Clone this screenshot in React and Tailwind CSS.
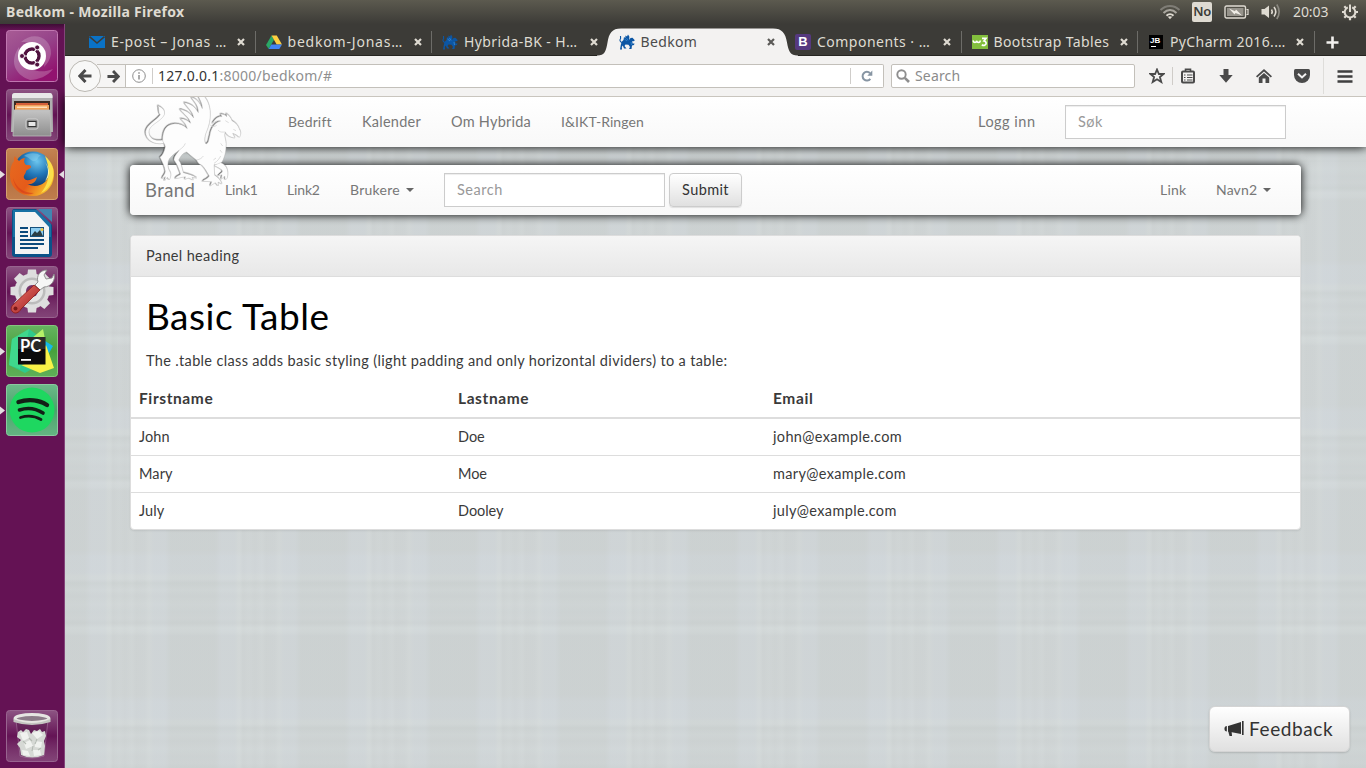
import React from "react";

/* ---------- Launcher icons ---------- */

const UbuntuIcon = () => (
  <svg viewBox="0 0 52 52" className="size-full">
    <defs>
      <linearGradient id="ub" x1="0" y1="0" x2="0.6" y2="1">
        <stop offset="0" stopColor="#a85c95" />
        <stop offset="0.5" stopColor="#96448a" />
        <stop offset="1" stopColor="#92126f" />
      </linearGradient>
    </defs>
    <rect x="0.5" y="0.5" width="51" height="51" rx="3" fill="url(#ub)" stroke="#c077b0" />
    <path d="M15 12C28 0 46 8 45 24C44 30 41 34 38 37C41 22 34 12 15 12Z" fill="#fff" opacity=".2" />
    <path d="M13 17C4 30 7 44 24 50C32 50 42 46 47 39C32 45 15 40 13 17Z" fill="#fff" opacity=".22" />
    <circle cx="26" cy="26" r="14" fill="#fff" />
    <circle cx="26" cy="26" r="7" fill="none" stroke="#50123f" strokeWidth="3.4" />
    <g stroke="#fff" strokeWidth="1.2">
      <path d="M26 26L16 26M26 26L31 17.500M26 26L31 34.500" />
    </g>
    <circle cx="26" cy="26" r="5.200" fill="#fff" />
    <g fill="#50123f" stroke="#fff" strokeWidth=".9">
      <circle cx="16" cy="26" r="2.500" />
      <circle cx="31.200" cy="17.400" r="2.500" />
      <circle cx="31.200" cy="34.600" r="2.500" />
    </g>
  </svg>
);

const Tile = ({ a = "#8d5483", b = "#641455", stroke = "#98648f" }) => {
  const id = "tile" + a.slice(1) + b.slice(1);
  return (
    <>
      <defs>
        <linearGradient id={id} x1="0" y1="0" x2="0" y2="1">
          <stop offset="0" stopColor={a} />
          <stop offset="0.5" stopColor={b} />
          <stop offset="1" stopColor={a} stopOpacity=".75" />
        </linearGradient>
      </defs>
      <rect x="0.5" y="0.5" width="51" height="51" rx="3" fill={b} />
      <rect x="0.5" y="0.5" width="51" height="51" rx="3" fill={`url(#${id})`} stroke={stroke} />
    </>
  );
};

const FilesIcon = () => (
  <svg viewBox="0 0 52 52" className="size-full">
    <defs>
      <linearGradient id="cab" x1="0" y1="0" x2="0" y2="1">
        <stop offset="0" stopColor="#c4c4c4" />
        <stop offset="1" stopColor="#8e8e8e" />
      </linearGradient>
    </defs>
    <Tile />
    <path d="M6 7Q6 4 9 4H44Q46 4 46.500 7L47 43H5Z" fill="#b0b0b0" />
    <path d="M6 7Q6 4 9 4H44Q46 4 46.500 7V9H6Z" fill="#e8e8e8" />
    <rect x="8" y="12" width="36" height="10" fill="#3a2a22" />
    <rect x="10" y="14" width="32" height="8" fill="#d5603a" />
    <rect x="9" y="16" width="34" height="6" fill="#f0a35c" />
    <rect x="11" y="17.500" width="30" height="1.500" fill="#ffe0b8" />
    <path d="M8 21H44L45 47H7Z" fill="url(#cab)" stroke="#bdbdbd" strokeWidth=".8" />
    <rect x="20" y="30" width="12" height="10" rx="2" fill="#8d8d8d" stroke="#d0d0d0" />
    <rect x="22" y="32.500" width="8" height="5" fill="#e6e6e6" stroke="#333" />
  </svg>
);

const FirefoxIcon = () => (
  <svg viewBox="0 0 52 52" className="size-full">
    <defs>
      <radialGradient id="globe" cx=".6" cy=".25" r=".7">
        <stop offset="0" stopColor="#6cc6ee" />
        <stop offset=".5" stopColor="#2277b8" />
        <stop offset="1" stopColor="#0c3268" />
      </radialGradient>
      <linearGradient id="fox" x1="0" y1="0" x2="1" y2=".6">
        <stop offset="0" stopColor="#e66a20" />
        <stop offset=".6" stopColor="#e55b1a" />
        <stop offset="1" stopColor="#f7bd2a" />
      </linearGradient>
    </defs>
    <Tile a="#c48452" b="#b26a3c" stroke="#d5a070" />
    <circle cx="27" cy="23" r="19.500" fill="url(#globe)" />
    <path d="M18 8C22 5 30 4 35 8C31 8 33 12 29 13C25 14 24 9 18 8Z" fill="#8fd4f2" opacity=".45" />
    <path d="M38 8C45 13 49 20 48 28C47 40 38 48 27 48C13 48 4 39 4 27C4 21 5 17 8 13C8 10 8 9 9 8C10 10 12 12 13 13C15 11 17 10 19 10C17.500 13 18 15 20 17C23 17 25 17 25 19C25 20 21 22 20 23C20 26 17 27 18 30C20 34 25 32 31 29C30 34 26 37 21 36C31 41 42 36 43 25C44 18 42 12 38 8Z" fill="url(#fox)" />
    <path d="M39 8C46 14 49 21 47 30C45 38 40 43 35 45C42 37 46 25 39 8Z" fill="#fbe04b" />
    <path d="M39 14C43 20 43 27 39 33C44 30 45 21 39 14Z" fill="#fff5a4" />
    <path d="M7 30C10 40 18 45 28 45C20 49 9 43 7 30Z" fill="#d43c1a" opacity=".6" />
  </svg>
);

const WriterIcon = () => (
  <svg viewBox="0 0 52 52" className="size-full">
    <Tile />
    <path d="M8 2H30L46 18V47Q46 50 43 50H9Q6 50 6 47V5Q6 2 8 2Z" fill="#0b5288" />
    <path d="M7 3H31L45 17V30H7Z" fill="#2387b8" opacity=".6" />
    <path d="M9 5H29L43 20V47H9Z" fill="#f4f4f4" />
    <path d="M32 2H46V15Z" fill="#4285b0" />
    <path d="M14 21H22M14 25H22M14 29H22M14 33H38M14 37H38M14 41H32" stroke="#0b4a7c" strokeWidth="1.800" />
    <rect x="24.500" y="20.500" width="13" height="9" fill="#8ecdf0" stroke="#17507c" />
    <path d="M25 29L29 24L31 26L34 23L37 29Z" fill="#2b3d44" />
    <circle cx="36" cy="22.500" r="1.500" fill="#f4c83f" />
  </svg>
);

const teeth = [0, 45, 90, 135, 180, 225, 270, 315];

const SettingsIcon = () => (
  <svg viewBox="0 0 52 52" className="size-full">
    <defs>
      <linearGradient id="redh" x1="0" y1="0" x2="1" y2="1">
        <stop offset="0" stopColor="#ee7a72" />
        <stop offset="1" stopColor="#9e1717" />
      </linearGradient>
    </defs>
    <Tile />
    <g fill="#dedede">
      {teeth.map((d) => (
        <path key={d} d="M21 11L22 3.500H30L31 11Z" transform={`rotate(${d} 26 25)`} />
      ))}
      <circle cx="26" cy="25" r="17.500" />
    </g>
    <circle cx="26" cy="25" r="13.500" fill="#bcbcbc" />
    <circle cx="26" cy="25" r="11" fill="#e5e5e5" />
    <circle cx="26" cy="25" r="6" fill="#74336a" />
    <path d="M29 19L32 16C30 10 34 4 41 4L38 9L40 13L46 12L48 8C50 14 45 21 38 21L34 24Z" fill="#f6f6f6" stroke="#888" strokeWidth=".9" />
    <path d="M28 19L34 24L15 43C13 47 9 48 7 46C4 44 5 40 8 38Z" fill="url(#redh)" stroke="#8e1a14" strokeWidth=".8" />
    <circle cx="9.500" cy="42.500" r="2" fill="#7a1818" />
  </svg>
);

const PyCharmIcon = () => (
  <svg viewBox="0 0 52 52" className="size-full">
    <Tile a="#66b360" b="#47a13c" stroke="#86c57f" />
    <path d="M6 14L23 4L34 12L40 36L19 48L3 40Z" fill="#2fc98b" />
    <path d="M6 14L23 4L20 20L14 44L3 40Z" fill="#44dc8c" opacity=".8" />
    <path d="M26 13L37 4L39 14Z" fill="#b4f068" />
    <path d="M36 14L47 21L42 30L36 28Z" fill="#14b9e8" />
    <path d="M40 20L48 43L34 48L15 40L30 36Z" fill="#f8f247" />
    <rect x="12" y="12" width="27.500" height="27.500" fill="#0c0c0c" />
    <path d="M12 12H39.500V24H12Z" fill="#fff" opacity=".12" />
    <text x="14" y="27" fontFamily="Lato, sans-serif" fontWeight="700" fontSize="16.500" fill="#fff">PC</text>
    <rect x="15" y="34" width="10" height="1.800" fill="#fff" />
  </svg>
);

const SpotifyIcon = () => (
  <svg viewBox="0 0 52 52" className="size-full">
    <Tile a="#6db98a" b="#48a56a" stroke="#8bc9a0" />
    <circle cx="26" cy="26" r="22.500" fill="#1ed760" />
    <g fill="none" stroke="#122016" strokeLinecap="round">
      <path d="M12.500 18C22 15 33 16 41 21" strokeWidth="4.400" />
      <path d="M13.500 26C21 23.500 30 24.500 37 29" strokeWidth="3.600" />
      <path d="M14.500 33.500C21 31.500 29 32 35 35.500" strokeWidth="2.800" />
    </g>
  </svg>
);

const TrashIcon = () => (
  <svg viewBox="0 0 52 52" className="size-full">
    <Tile />
    <path d="M10 10L14 46Q26 50 38 46L42 10Z" fill="#4e1a46" opacity=".35" stroke="#d8c8d6" strokeWidth=".8" />
    <path d="M12 22L15 20L17 22L20 19L23 20L25 24L28 20L31 21L34 19L36 22L39 21L40 26L38 31L39 36L38 45Q26 50 15 45L14 38L11 34L15 30L11 27Z" fill="#d6d9d5" />
    <path d="M14 23L21 22L23 28L17 31ZM26 23L33 21L37 25L31 29ZM18 33L24 30L27 36L20 39ZM29 31L36 32L35 38L29 37ZM16 40L22 41L24 46L17 45ZM27 40L34 40L35 45L28 46Z" fill="#f0f2ef" />
    <path d="M17 31L20 34M23 28L26 31M31 29L29 34M27 36L26 41M35 38L32 40" fill="none" stroke="#b4bab3" strokeWidth="1.100" />
    <ellipse cx="26" cy="8.500" rx="17" ry="4" fill="#8c7c88" stroke="#e6e6e2" strokeWidth="3" />
    <path d="M7.500 9V12Q26 18 44.500 12V9Q26 17 7.500 9Z" fill="#c4c5c1" />
  </svg>
);

const launcher = [
  { Icon: UbuntuIcon },
  { Icon: FilesIcon },
  { Icon: FirefoxIcon, running: true, focused: true },
  { Icon: WriterIcon },
  { Icon: SettingsIcon },
  { Icon: PyCharmIcon, running: true },
  { Icon: SpotifyIcon, running: true },
];

function Launcher() {
  return (
    <aside className="flex w-[65px] shrink-0 flex-col border-r border-[#84447a] bg-[linear-gradient(#3f0c36,#641254_6px,#641254)] pt-1.5 pb-1.5">
      <div className="flex flex-col gap-[7px]">
        {launcher.map(({ Icon, running, focused }, i) => (
          <div key={i} className="flex h-[52px] items-center">
            <svg viewBox="0 0 6 9" className="h-[9px] w-1.5">
              {running && <path d="M0 0.500L5 4.500L0 8.500Z" fill="#e3dde1" />}
            </svg>
            <div className="size-[52px]"><Icon /></div>
            <svg viewBox="0 0 6 9" className="h-[9px] w-1.5">
              {focused && <path d="M6 0.500L1 4.500L6 8.500Z" fill="#e3dde1" />}
            </svg>
          </div>
        ))}
      </div>
      <div className="mt-auto ml-1.5 size-[52px]"><TrashIcon /></div>
    </aside>
  );
}

/* ---------- Desktop top bar ---------- */

function TopBar() {
  return (
    <header className="flex h-6 shrink-0 items-center bg-[linear-gradient(#5c5a4f,#3c3b37)] pl-1.5 text-[#dfdbd2]">
      <span className="font-['Noto_Sans'] text-[14px] leading-6 font-bold tracking-[0.320px] whitespace-nowrap">Bedkom - Mozilla Firefox</span>
      <div className="ml-auto flex h-6 items-center">
        <svg width="22" height="16" viewBox="0 0 22 16" fill="none" strokeWidth="2">
          <path d="M1.500 6C7 0.500 15 0.500 20.500 6" stroke="#7f7d76" />
          <path d="M4.500 9C8.500 5 13.500 5 17.500 9" stroke="#a9a69e" />
          <path d="M7.500 11.800C9.500 9.800 12.500 9.800 14.500 11.800" stroke="#dfdbd2" />
          <path d="M8.800 12.800L11 15.200L13.200 12.800Q11 11.500 8.800 12.800Z" fill="#dfdbd2" />
        </svg>
        <span className="ml-[11px] flex h-5 w-5 items-center justify-center rounded-[2px] bg-[#dfdbd2] font-['Noto_Sans'] text-[13px] font-semibold tracking-[-0.5px] text-[#3c3b37]">No</span>
        <svg width="25" height="14" viewBox="0 0 25 14" className="ml-3">
          <rect x="1" y="1" width="20.500" height="12" rx="1.500" fill="none" stroke="#dfdbd2" strokeWidth="1.400" />
          <rect x="3" y="3" width="16.500" height="8" fill="#96938b" />
          <path d="M22.500 4.500H24V9.500H22.500" fill="none" stroke="#dfdbd2" strokeWidth="1.200" />
          <path d="M5 3.500L11 6.300L12 4.500L18 10.500L11.500 8L10.500 9.500Z" fill="#efece5" />
        </svg>
        <svg width="20" height="18" viewBox="0 0 20 18" className="ml-3" fill="none" strokeWidth="1.600">
          <path d="M0.500 6H3.500L8 2.500V15L3.500 11.500H0.500Z" fill="#dfdbd2" />
          <path d="M10.500 6.500Q12 8.700 10.500 11" stroke="#dfdbd2" />
          <path d="M13 4Q16.500 8.700 13 13.500" stroke="#dfdbd2" />
          <path d="M15.800 1.500Q20.500 8.700 15.800 16" stroke="#8b8981" />
        </svg>
        <span className="ml-3 w-[37px] font-['Noto_Sans'] text-[14px] leading-6 tracking-[-0.1px] whitespace-nowrap">20:03</span>
        <svg width="18" height="18" viewBox="0 0 18 18" className="mr-[7px] ml-[11px]" fill="none" stroke="#dfdbd2">
          <path d="M6.800 4.300A5.300 5.300 0 1 0 11.200 4.300" strokeWidth="2" />
          <path d="M9 1.500V9" strokeWidth="2" />
          <path d="M1 9H4M14 9H17M9 14V17.200M3.300 3.300L5.300 5.300M14.700 3.300L12.700 5.300M3.300 14.700L5.300 12.700M14.700 14.700L12.700 12.700" strokeWidth="2.200" />
        </svg>
      </div>
    </header>
  );
}

/* ---------- Browser tabs ---------- */

const MailFavicon = () => (
  <svg viewBox="0 0 16 16" className="size-4">
    <rect y="2" width="16" height="12" fill="#0a72c6" />
    <path d="M0.500 2.500L8 9L15.500 2.500" fill="none" stroke="#3c3b37" strokeWidth="1.600" />
  </svg>
);
const DriveFavicon = () => (
  <svg viewBox="0 0 16 16" className="size-4">
    <path d="M5.500 1.500L0 11L2.700 15L8 5.800Z" fill="#2aa866" />
    <path d="M5.500 1.500H10.800L16 10.500H10.700Z" fill="#ffcf40" />
    <path d="M5.300 10.500H16L13.300 15H2.700Z" fill="#4285f4" />
  </svg>
);
const GriffinFavicon = () => (
  <svg viewBox="0 0 16 16" className="size-4" fill="#0c56a4">
    <path d="M4.500 6L5 3L6.300 4L6.500 1.500L8 2.500L9 0.500L10.300 2.500V6L11.500 4L13.500 3.800L15.800 6.200L14.800 7.200L13.300 7L13.500 9.500L15.500 9.500L15 11L13 11.500L12.500 15H10L11 13L9.500 10.800L6.500 10.500L5.500 12L7.500 14.500H5L3.800 11.500L2.800 13L3 15.500H1L1.700 11.500L2.500 8Z" />
    <path d="M3 8.500C1 8 0.300 6 1.600 4.500L1.500 2" fill="none" stroke="#0c56a4" strokeWidth="1.100" />
    <path d="M5.500 5L8 7M7.500 4L9 6.500M12 8L12.500 11" stroke="#3f91d8" strokeWidth=".7" />
  </svg>
);
const BootstrapFavicon = () => (
  <span className="flex size-4 items-center justify-center rounded-[2px] bg-[#56397f] font-['Liberation_Sans'] text-[13px] leading-none font-bold text-white">B</span>
);
const W3Favicon = () => (
  <svg viewBox="0 0 16 16" className="size-4">
    <rect y="1" width="16" height="14" fill="#83bf3d" />
    <path d="M1 6.500Q1.500 8.500 3 8.500Q4.500 8.500 4.500 6.800Q5 8.500 6.500 8.500Q8 8.500 8.500 6.500" fill="none" stroke="#fff" strokeWidth="1.500" />
    <path d="M10 4.300H14L12 7Q14.500 7.500 14 9.800Q12.500 12.500 9.800 10.700" fill="none" stroke="#fff" strokeWidth="1.700" />
  </svg>
);
const JetBrainsFavicon = () => (
  <span className="flex size-4 items-center justify-center">
    <span className="flex h-3.5 w-3.5 flex-col items-start justify-between bg-black px-px py-0.5">
      <span className="font-['Liberation_Sans'] text-[8px] leading-[7px] font-bold text-white">JB</span>
      <span className="ml-px h-px w-[5px] bg-white" />
    </span>
  </span>
);

const tabs = [
  { icon: MailFavicon, label: "E-post – Jonas …", track: "tracking-[0.640px]", sep: true },
  { icon: DriveFavicon, label: "bedkom-Jonas…", track: "tracking-[0.800px]", sep: true },
  { icon: GriffinFavicon, label: "Hybrida-BK - H…", track: "tracking-[0.400px]" },
  { icon: GriffinFavicon, label: "Bedkom", track: "tracking-[0.350px]", active: true },
  { icon: BootstrapFavicon, label: "Components · …", track: "tracking-[0.480px]", sep: true },
  { icon: W3Favicon, label: "Bootstrap Tables", track: "tracking-[0.370px]", sep: true },
  { icon: JetBrainsFavicon, label: "PyCharm 2016.…", track: "tracking-[0.380px]", sep: true },
];

function Tab({ icon: Icon, label, track, sep, active }) {
  return (
    <div className="relative flex h-8 w-[176.500px] shrink-0 items-center pt-[3px] pl-2.5">
      {active && (
        <svg className="absolute top-1 -left-3 h-[29px] w-[202px]" viewBox="0 0 202 29">
          <path d="M0 29V27.500C8 27.500 9 23 10.500 14.500C12 5 15 0.500 24 0.500H176C185 0.500 188.500 5 190 14.500C191.500 23 193 27.500 201 27.500V29Z" fill="#f3f2f1" />
        </svg>
      )}
      <span className="relative size-4 shrink-0"><Icon /></span>
      <span className={`relative ml-1.5 w-[126px] overflow-visible font-['Noto_Sans'] text-[14px] leading-6 whitespace-nowrap ${track} ${active ? "text-[#4c4c4c]" : "text-[#dfdbd2]"}`}>{label}</span>
      <svg viewBox="0 0 8 8" className="relative size-2">
        <path d="M1 1L7 7M7 1L1 7" stroke={active ? "#5b5a57" : "#dfdbd2"} strokeWidth="2.200" />
      </svg>
      {sep && <span className="absolute top-[7px] right-0 h-[22px] w-px bg-[#6d6c68]" />}
    </div>
  );
}

function TabStrip() {
  return (
    <div className="flex h-8 shrink-0 border-b border-[#262521] bg-[#3c3b37] pl-3.5">
      {tabs.map((t) => <Tab key={t.label} {...t} />)}
      <svg viewBox="0 0 13 13" className="mt-3 ml-[11px] size-[13px]">
        <path d="M6.500 0.500V12.500M0.500 6.500H12.500" stroke="#f2f1ee" strokeWidth="2.600" />
      </svg>
    </div>
  );
}

/* ---------- Browser toolbar ---------- */

const Arrow = ({ className }) => (
  <svg viewBox="0 0 14 14" className={className}>
    <path d="M7.500 1L1.800 7L7.500 13M2 7H13.500" fill="none" stroke="#4a4a4a" strokeWidth="3" />
  </svg>
);

function Toolbar() {
  return (
    <div className="relative z-10 flex h-[41px] shrink-0 items-center border-b border-[#c9c5be] bg-[#f3f2f1] pl-1">
      <div className="z-10 flex size-[32px] shrink-0 items-center justify-center rounded-full border border-[#bbb8b2] bg-[#f8f8f7]">
        <Arrow className="size-3.5" />
      </div>
      <div className="-ml-1 flex h-6 w-[787px] shrink-0 items-center rounded-r-[2px] border border-l-0 border-[#c3c0ba] bg-white">
        <div className="flex h-full w-[29px] items-center justify-center border-r border-[#c3c0ba] bg-[#f6f5f4] pl-1">
          <Arrow className="h-[13px] w-[13px] rotate-180" />
        </div>
        <svg viewBox="0 0 14 14" className="ml-1.5 size-3.5" fill="none" stroke="#8e8e8e">
          <circle cx="7" cy="7" r="6.300" />
          <path d="M7 6V10.500M7 3.300V4.800" strokeWidth="1.500" />
        </svg>
        <span className="ml-1.5 h-4 w-px bg-[#cfcdca]" />
        <span className="ml-[5px] font-['Noto_Sans'] text-[14px] leading-[22px] tracking-[0.240px] whitespace-nowrap text-[#8f8f8f]"><span className="text-[#333]">127.0.0.1</span>:8000/bedkom/#</span>
        <span className="ml-auto h-4 w-px bg-[#cfcdca]" />
        <svg viewBox="0 0 12 12" className="mr-2.5 ml-2.5 size-3" fill="none">
          <path d="M9.300 8.800A4.300 4.300 0 1 1 9 3.200" stroke="#8795a3" strokeWidth="2" />
          <path d="M11.300 0.500V5.700H6.300Z" fill="#8795a3" />
        </svg>
      </div>
      <div className="ml-[7px] flex h-6 w-[244px] shrink-0 items-center rounded-[2px] border border-[#c3c0ba] bg-white pl-1">
        <svg viewBox="0 0 14 14" className="size-3.5" fill="none" stroke="#8e8e8e">
          <circle cx="5.500" cy="5.500" r="4.200" strokeWidth="1.900" />
          <path d="M8.800 8.800L13 13" strokeWidth="2.600" />
        </svg>
        <span className="ml-[5px] font-['Noto_Sans'] text-[14px] leading-[22px] tracking-[0.150px] text-[#8b8b8b]">Search</span>
      </div>
      <svg viewBox="0 0 16 16" className="ml-[14px] size-4" fill="none" stroke="#4a4a4a" strokeWidth="1.800">
        <path d="M8 1.500L9.900 6H14.600L10.900 9L12.300 14L8 11.200L3.700 14L5.100 9L1.400 6H6.100Z" />
      </svg>
      <span className="ml-[7px] h-[18px] w-px bg-[#cfccc8]" />
      <svg viewBox="0 0 14 16" className="ml-2 h-4 w-3.5" fill="none" stroke="#4a4a4a">
        <rect x="1" y="3.500" width="12" height="11" rx="1" strokeWidth="2" />
        <path d="M4.500 3V1.200H9.500V3" strokeWidth="1.600" />
        <path d="M3 7H4.500M6 7H11.500M3 9.500H4.500M6 9.500H11.500M3 12H4.500M6 12H11.500" strokeWidth="1.200" />
      </svg>
      <svg viewBox="0 0 14 14" className="ml-6 size-3.5">
        <path d="M4.500 0H9.500V6H13.700L7 13.800L0.300 6H4.500Z" fill="#4a4a4a" />
      </svg>
      <svg viewBox="0 0 16 14" className="ml-[23px] h-3.500 w-4">
        <path d="M8 0L16 7.300L14.800 8.500L8 2.400L1.200 8.500L0 7.300Z" fill="#4a4a4a" />
        <path d="M2.800 8.600L8 4L13.200 8.600V14H9.500V9.500H6.500V14H2.800Z" fill="#4a4a4a" />
      </svg>
      <svg viewBox="0 0 16 14" className="ml-[22px] h-3.500 w-4">
        <path d="M1.500 0H14.500Q16 0 16 1.500V6A8 8 0 0 1 0 6V1.500Q0 0 1.500 0Z" fill="#4a4a4a" />
        <path d="M4 4.800L8 8.500L12 4.800" fill="none" stroke="#f3f2f1" strokeWidth="2" />
      </svg>
      <span className="ml-[13px] h-9 w-px bg-[#deddda]" />
      <svg viewBox="0 0 16 13" className="ml-[13px] h-[13px] w-4">
        <path d="M0.500 1.500H15.500M0.500 6.500H15.500M0.500 11.500H15.500" stroke="#3f3f3f" strokeWidth="2.600" />
      </svg>
    </div>
  );
}

/* ---------- Web page ---------- */

const Griffin = () => (
  <svg className="pointer-events-none absolute top-0 left-[75px] z-20 h-[93px] w-[105px]" viewBox="30 21 315 279">
    <defs>
      <filter id="emboss" x="-5%" y="-5%" width="110%" height="110%">
        <feDropShadow dx="-1.500" dy="-1.500" stdDeviation="2" floodColor="#222" floodOpacity="1" />
      </filter>
    </defs>
    <g filter="url(#emboss)" fill="#fdfdfd" stroke="#c0c0c0" strokeWidth="1.200" strokeLinejoin="round">
      <path d="M102 160C70 166 45 148 47 124C50 103 78 92 91 74C84 68 88 58 84 47C96 52 106 60 103 74C94 94 62 102 57 122C54 142 72 155 98 150Z" />
      <path d="M98 150C98 122 108 102 135 101C150 101 162 106 172 116C168 100 160 96 152 86C164 86 174 92 182 100C178 82 162 74 150 58C165 60 180 68 191 84C188 62 172 54 163 38C180 40 194 48 205 68C206 44 190 34 184 22C198 26 208 34 217 56C218 40 208 28 204 16H220C248 45 244 92 230 124C222 142 223 158 228 162C238 158 236 146 240 135C242 118 252 98 272 93C262 90 256 95 248 100C254 86 266 78 276 80L272 72C280 72 286 75 290 80L290 71C298 76 303 84 306 92C318 98 326 108 328 118C333 124 334 134 328 142C322 136 316 132 308 130L315 144C302 142 292 138 286 126C280 138 290 150 288 166C288 182 286 194 280 208C276 220 266 226 252 224C254 236 252 246 254 256C264 262 272 270 276 282L264 276L265 288L256 278L241 288L245 275L218 274C226 266 234 266 238 258C230 246 226 236 216 226C206 222 202 216 200 210C188 202 180 194 170 186C158 188 150 202 146 210C154 220 156 234 160 248C174 252 188 254 200 264L186 262L190 270L176 264L165 268L166 260L136 266C140 256 148 258 152 252C146 238 144 226 132 210C132 198 142 190 148 180C138 188 128 194 118 206C112 216 112 230 118 242C124 250 124 258 118 270L112 262L104 272L106 260L96 266C98 258 106 252 106 244C104 230 98 218 90 202C98 196 104 184 106 170C106 162 98 158 98 150Z" />
      <path d="M272 218C286 222 298 238 292 264L286 270L284 258L274 268L276 254L264 258C272 248 280 248 276 240C268 234 258 230 252 226Z" />
    </g>
    <g fill="none" stroke="#d4d4d4" strokeWidth="2.400">
      <path d="M148 180C156 174 162 170 166 160M200 210C210 208 216 204 220 198M240 104C246 112 254 110 260 106M264 120C270 128 278 126 286 126M252 220C262 214 268 206 272 198M286 92L296 98" />
      <path d="M310 118L318 122M250 210L258 204M272 160L278 168M270 180L276 188" />
    </g>
  </svg>
);

const Caret = () => (
  <svg viewBox="0 0 8 4" className="ml-1.5 h-1 w-2"><path d="M0 0H8L4 4Z" fill="#666" /></svg>
);

const NavLink = ({ children, className }) => (
  <a className={`flex shrink-0 items-center whitespace-nowrap text-[#777] ${className}`}>{children}</a>
);

const Input = ({ children, className = "" }) => (
  <div className={`flex h-[34px] w-[221px] shrink-0 items-center border border-[#ccc] bg-white px-3 text-[#999] shadow-[inset_0_1px_1px_rgba(0,0,0,.075)] ${className}`}>{children}</div>
);

const rows = [
  ["John", "Doe", "john@example.com"],
  ["Mary", "Moe", "mary@example.com"],
  ["July", "Dooley", "july@example.com"],
];

const columnTracking = ["tracking-[0.100px]", "tracking-[-0.050px]", "tracking-[0.350px]"];

function Page() {
  return (
    <main className="relative flex-1 bg-[#d0d5d7] bg-[repeating-linear-gradient(90deg,rgba(200,206,205,.3)_0px,rgba(200,206,205,.3)_20px,rgba(209,216,221,.3)_26px,rgba(209,216,221,.3)_40px,rgba(218,224,223,.3)_43px,rgba(218,224,223,.3)_45px,rgba(204,209,208,.2)_48px,rgba(214,220,219,.2)_54px,rgba(204,209,208,.2)_60px,rgba(217,223,222,.2)_67px,rgba(204,209,208,.2)_71px,rgba(208,214,214,.2)_80px,rgba(217,223,222,.3)_84px,rgba(209,216,221,.3)_89px,rgba(209,216,221,.3)_100px,rgba(200,206,205,.3)_106px,rgba(200,206,205,.3)_130px),repeating-linear-gradient(180deg,rgba(203,208,207,.45)_0px,rgba(203,208,207,.45)_18px,rgba(208,214,219,.45)_25px,rgba(208,214,219,.45)_40px,rgba(215,221,220,.45)_44px,rgba(215,221,220,.45)_47px,rgba(199,205,203,.45)_51px,rgba(211,217,216,.45)_58px,rgba(203,208,207,.45)_64px,rgba(211,217,216,.45)_72px,rgba(204,210,210,.45)_80px,rgba(208,213,213,.45)_86px,rgba(199,205,203,.45)_91px,rgba(217,223,222,.45)_96px,rgba(213,219,218,.45)_100px,rgba(203,208,207,.45)_104px,rgba(203,208,207,.45)_145px)] font-[Lato] text-[14px] leading-5">
      <Griffin />
      <nav className="flex h-[50px] bg-[linear-gradient(#fff,#f8f8f8)] pl-[223px] shadow-[0_0_10px_#000]">
        <NavLink className="w-[74px] tracking-[0.150px]">Bedrift</NavLink>
        <NavLink className="w-[89px] text-[14.500px] tracking-[0.250px]">Kalender</NavLink>
        <NavLink className="w-[110px] text-[14.500px] tracking-[0.230px]">Om Hybrida</NavLink>
        <NavLink className="tracking-[0.080px]">I&amp;IKT-Ringen</NavLink>
        <NavLink className="ml-auto w-[87px] text-[14.500px] tracking-[0.500px]">Logg inn</NavLink>
        <Input className="mt-2 mr-20 text-[14.500px] tracking-[0.500px]">Søk</Input>
      </nav>

      <div className="pr-[65px] pl-[65px]">
        <nav className="mt-[18px] flex h-[50px] rounded-[4px] bg-[linear-gradient(#fff,#f8f8f8)] pl-[15px] shadow-[0_0_10px_#000]">
          <NavLink className="w-20 text-[18.500px] tracking-[0.400px]">Brand</NavLink>
          <NavLink className="w-[62px] tracking-[-0.150px]">Link1</NavLink>
          <NavLink className="w-[63px] tracking-[-0.150px]">Link2</NavLink>
          <NavLink className="w-[94px] tracking-[0.250px]">Brukere<Caret /></NavLink>
          <Input className="mt-2 text-[14.500px] tracking-[0.550px]">Search</Input>
          <button className="mt-2 ml-1 h-[34px] w-[73px] rounded-[4px] border border-[#ccc] bg-[linear-gradient(#fff,#e0e0e0)] text-[14.500px] tracking-[0.400px] text-[#333] shadow-[0_1px_1px_rgba(0,0,0,.1)]">Submit</button>
          <NavLink className="ml-auto w-14 tracking-[0.200px]">Link</NavLink>
          <NavLink className="w-[85px] tracking-[0.150px]">Navn2<Caret /></NavLink>
        </nav>

        <section className="mt-5 rounded-[4px] border border-[#ddd] bg-white text-[14.500px] text-[#3a3a3a] shadow-[0_1px_2px_rgba(0,0,0,.08)]">
          <div className="h-[41px] rounded-t-[3px] border-b border-[#ddd] bg-[linear-gradient(#f5f5f5,#e8e8e8)] px-[15px] py-2.5 tracking-[0.350px]">Panel heading</div>
          <div className="px-[15px] pt-[19px]">
            <h2 className="text-[37px] leading-10 font-normal tracking-[0.500px] text-black">Basic Table</h2>
            <p className="mt-[15px] tracking-[0.345px]">The .table class adds basic styling (light padding and only horizontal dividers) to a table:</p>
          </div>
          <table className="mt-[9px] w-full table-fixed border-collapse text-left">
            <colgroup>
              <col className="w-[319px]" />
              <col className="w-[315px]" />
              <col />
            </colgroup>
            <thead>
              <tr className="h-[38px] border-b-2 border-[#ddd]">
                {["Firstname", "Lastname", "Email"].map((h) => <th key={h} className="px-2 pb-0.5 text-[15.500px] font-bold tracking-[0.600px]">{h}</th>)}
              </tr>
            </thead>
            <tbody>
              {rows.map((r) => (
                <tr key={r[0]} className="h-[37px] border-t border-[#ddd] first:border-t-0">
                  {r.map((c, i) => <td key={c} className={`px-2 ${columnTracking[i]}`}>{c}</td>)}
                </tr>
              ))}
            </tbody>
          </table>
        </section>
      </div>

      <button className="absolute right-4 bottom-4 flex h-[46px] w-[141px] items-center rounded-[6px] border border-[#d4d4d4] bg-[linear-gradient(#fff,#e0e0e0)] pl-3.5 text-[19px] tracking-[0.600px] text-[#333] shadow-[0_1px_2px_rgba(0,0,0,.15)]">
        <svg viewBox="0 0 20 16" className="mr-[5px] h-4 w-5" fill="#333">
          <path d="M4 5L17 1V13L4 10.500Z" />
          <rect x="18" y="0" width="1.600" height="14" />
          <path d="M2.800 5V10.500Q0.500 10.500 0.500 7.800Q0.500 5 2.800 5Z" />
          <path d="M4 9.500H7.500L8 15H5.500Z" />
        </svg>
        Feedback
      </button>
    </main>
  );
}

export default function App() {
  return (
    <div className="flex h-[768px] w-[1366px] flex-col overflow-hidden">
      <TopBar />
      <div className="flex min-h-0 flex-1">
        <Launcher />
        <div className="flex min-w-0 flex-1 flex-col">
          <TabStrip />
          <Toolbar />
          <Page />
        </div>
      </div>
    </div>
  );
}
